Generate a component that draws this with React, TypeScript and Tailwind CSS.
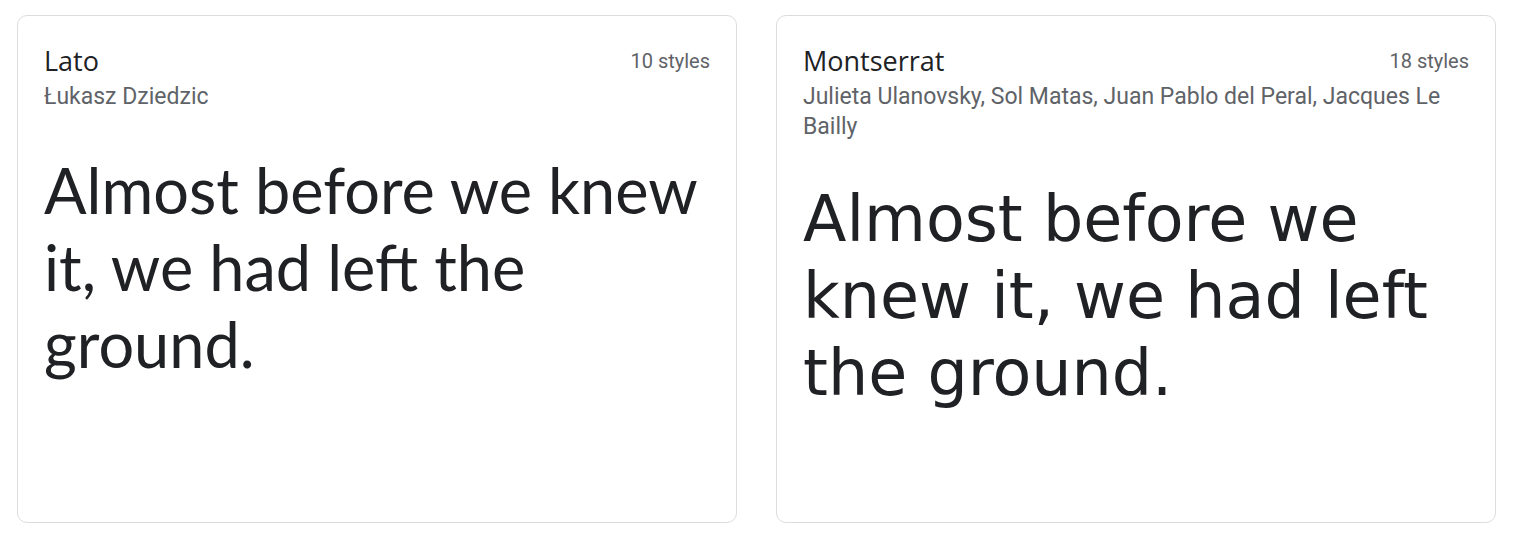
import React from "react";

type Card = {
  name: string;
  author: string;
  styles: string;
  sampleClass: string;
};

const cards: Card[] = [
  {
    name: "Lato",
    author: "Łukasz Dziedzic",
    styles: "10 styles",
    sampleClass: "font-[Lato,sans-serif] text-[63px] leading-[77px]",
  },
  {
    name: "Montserrat",
    author: "Julieta Ulanovsky, Sol Matas, Juan Pablo del Peral, Jacques Le Bailly",
    styles: "18 styles",
    sampleClass: "font-['DejaVu_Sans',sans-serif] text-[63.5px] leading-[77px]",
  },
];

export default function App() {
  return (
    <div className="min-h-[543px] w-[1513px] bg-white pl-[17px] pt-[15px] flex gap-[39px]">
      {cards.map((c) => (
        <div
          key={c.name}
          className="w-[720px] h-[508px] shrink-0 rounded-[10px] border border-[#dadce0] bg-white pl-[26px] pr-[26px] pt-[29px]"
        >
          <div className="flex items-start justify-between gap-6">
            <div className="font-['Open_Sans',sans-serif] text-[27px] leading-[32px] text-[#202124]">
              {c.name}
            </div>
            <div className="shrink-0 pt-[1px] font-[Roboto,sans-serif] text-[20px] leading-[30px] text-[#5f6368]">
              {c.styles}
            </div>
          </div>
          <div className="mt-[5px] font-[Roboto,sans-serif] text-[23px] leading-[30px] text-[#5f6368]">
            {c.author}
          </div>
          <div className={`mt-[39px] text-[#202124] ${c.sampleClass}`}>
            Almost before we knew it, we had left the ground.
          </div>
        </div>
      ))}
    </div>
  );
}
